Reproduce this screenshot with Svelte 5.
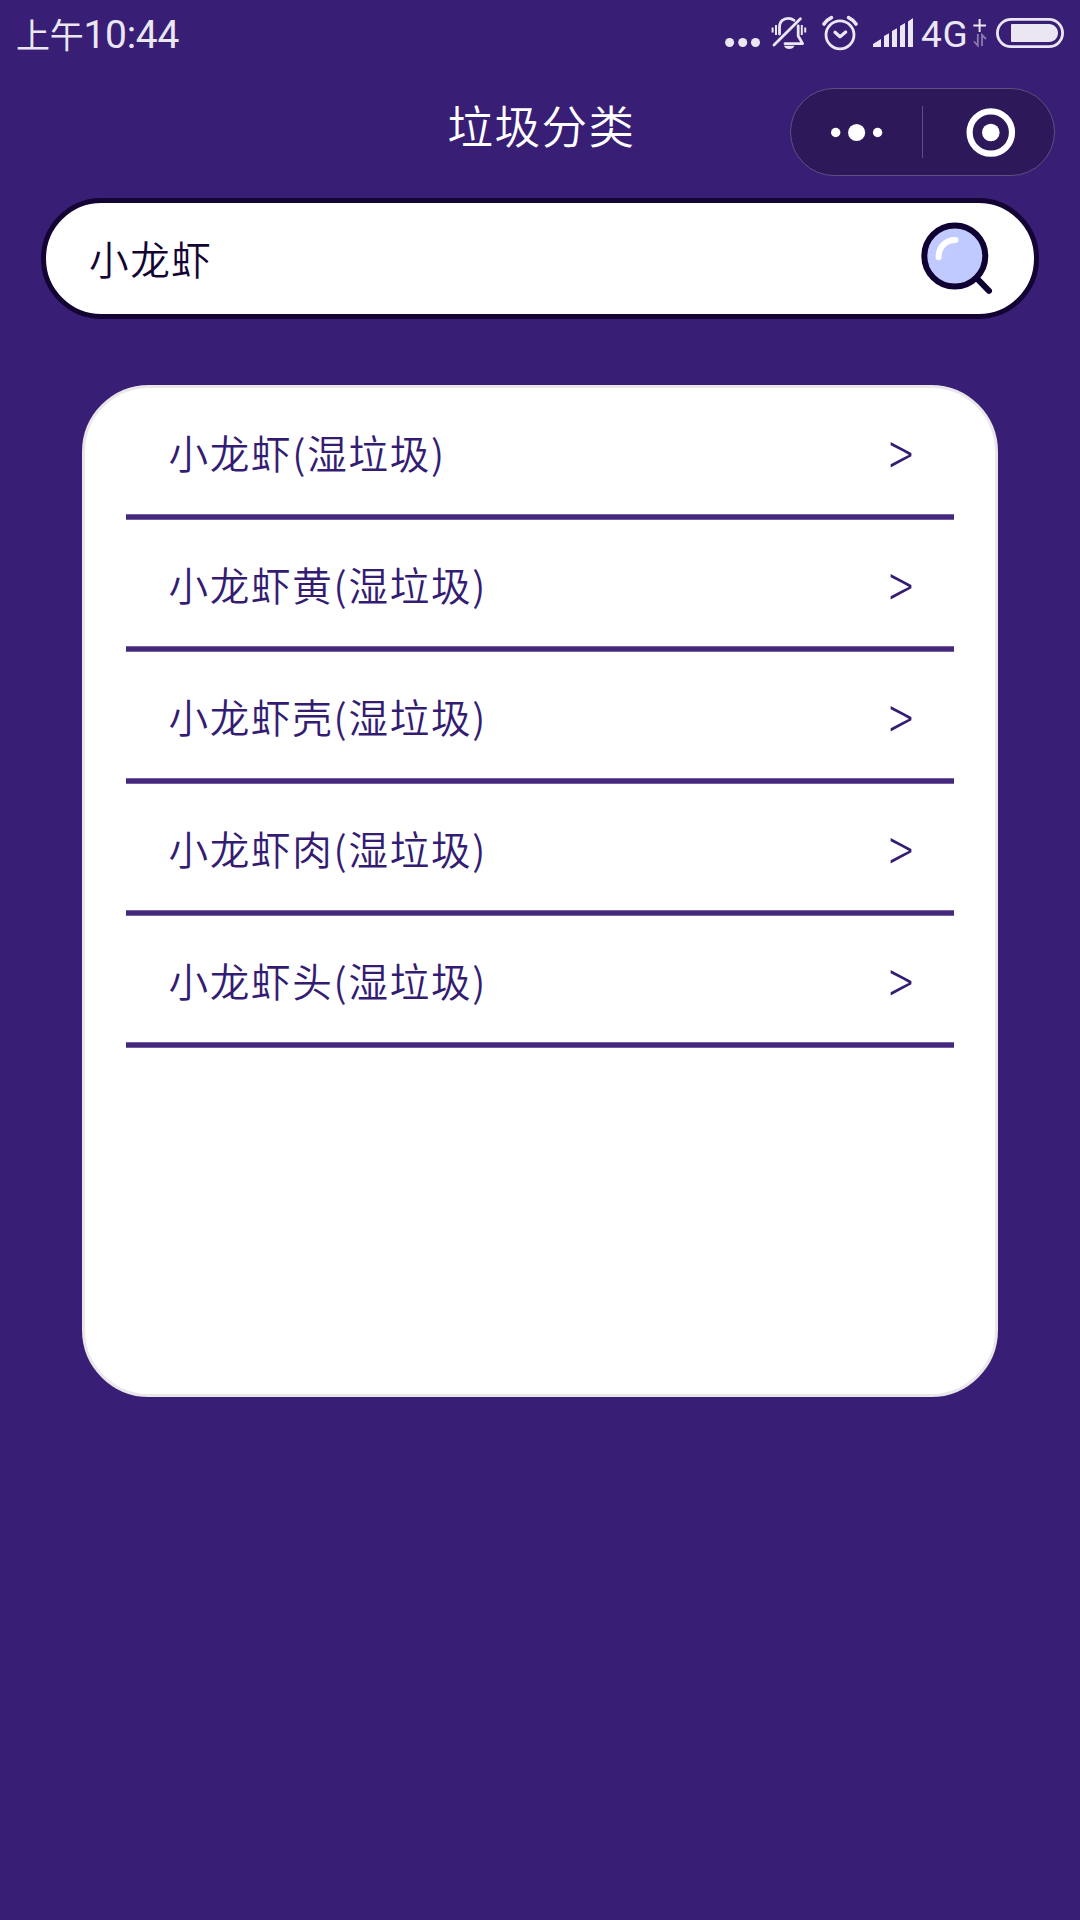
<script lang="ts">
	type Result = { name: string; kind: string };

	let keyword = $state('小龙虾');

	const results: Result[] = [
		{ name: '小龙虾', kind: '湿垃圾' },
		{ name: '小龙虾黄', kind: '湿垃圾' },
		{ name: '小龙虾壳', kind: '湿垃圾' },
		{ name: '小龙虾肉', kind: '湿垃圾' },
		{ name: '小龙虾头', kind: '湿垃圾' }
	];
</script>

<div class="page">
	<div class="status">
		<div class="time"><span class="ampm">上午</span>10:44</div>
		<div class="indicators">
			<svg class="more" width="36" height="60" viewBox="0 0 36 60">
				<circle cx="5.6" cy="42.5" r="4.5" />
				<circle cx="18.7" cy="42.5" r="4.5" />
				<circle cx="31.5" cy="42.5" r="4.5" />
			</svg>
			<!-- muted bell -->
			<svg class="bell" width="36" height="60" viewBox="0 0 36 60">
				<g class="line">
					<path d="M8.5 34V27C8.5 21.5 12.5 18.3 17.2 18.3C19.5 18.3 21.5 19 23 20.3" />
					<path d="M27.2 26V36L31.6 43.6H14" />
					<path d="M29.4 18.8L3 45" />
				</g>
				<path class="thin" d="M5 25V35M1.6 27.5V32.5M30.8 25V35M34.2 27.5V32.5" />
				<path d="M13 45.8H23.5C22.5 48 20.8 49 18.2 49S14 48 13 45.8Z" />
			</svg>
			<!-- alarm clock -->
			<svg class="alarm" width="36" height="60" viewBox="0 0 36 60">
				<g class="line">
					<circle cx="18" cy="34.8" r="14" />
					<path d="M13 32.3L18 36.8L23.7 32" stroke-width="3.2" />
					<path d="M2 24Q4.8 19.8 9.4 17.6M34 24Q31.2 19.8 26.6 17.6" stroke-width="3.6" />
				</g>
			</svg>
			<svg class="signal" width="41" height="60" viewBox="0 0 41 60">
				<path d="M0 47V44L8 39V47ZM11 47V36L16 33.3V47ZM19 47V31L24 28.3V47ZM27 47V26L32 23V47ZM35 47V21.5L40 18V47Z" />
			</svg>
			<span class="net">4G</span>
			<svg class="plus" width="14" height="60" viewBox="0 0 14 60">
				<path class="thin" d="M0.3 25.5H13M6.6 19V32" />
				<path class="faint" d="M4.8 34V45.5L1 41.5M9 46V35L13 39" />
			</svg>
			<svg class="battery" width="68" height="60" viewBox="0 0 68 60">
				<rect class="line" x="1.4" y="19.4" width="65.2" height="27.3" rx="13.6" />
				<path d="M16 24H53C58 24 62 28 62 33S58 42 53 42H16Q15 42 15 41V25Q15 24 16 24Z" />
			</svg>
		</div>
	</div>

	<header class="nav">
		<h1>垃圾分类</h1>
		<div class="capsule">
			<svg width="131" height="86" viewBox="0 0 131 86">
				<circle cx="44.7" cy="43.5" r="4.7" />
				<circle cx="65.6" cy="43.5" r="8.6" />
				<circle cx="86.6" cy="43.5" r="4.7" />
			</svg>
			<i class="split"></i>
			<svg width="131" height="86" viewBox="0 0 131 86">
				<circle class="ring" cx="67.8" cy="43.5" r="21.2" />
				<circle cx="67.8" cy="43.5" r="8.8" />
			</svg>
		</div>
	</header>

	<div class="search">
		<input type="text" aria-label="垃圾名称" bind:value={keyword} />
		<svg class="lens" width="76" height="76" viewBox="0 0 76 76">
			<path d="M57.7 56.2L71 69.8" />
			<circle cx="36.8" cy="35" r="30.5" />
			<path class="shine" d="M20.6 36.2C20.6 26.4 27.2 18.9 37.5 18.9" />
		</svg>
	</div>

	<ul class="results">
		{#each results as item (item.name)}
			<li>
				<span>{item.name}({item.kind})</span>
				<span class="arrow">&gt;</span>
			</li>
		{/each}
	</ul>
</div>

<style>
	:global(body) {
		background: #381e74;
	}
	.page {
		box-sizing: border-box;
		height: 1920px;
		overflow: hidden;
		background: #381e74;
		font-family: 'Noto Sans CJK SC', sans-serif;
		font-weight: 350;
	}
	.status {
		display: flex;
		justify-content: space-between;
		height: 72px;
		padding: 0 16px;
		color: #ebe7f2;
	}
	.time {
		font-family: Roboto, 'Noto Sans CJK SC', sans-serif;
		font-size: 39px;
		font-weight: 400;
		letter-spacing: -0.3px;
		line-height: 70px;
	}
	.ampm {
		font-size: 34px;
	}
	.indicators {
		display: flex;
		align-items: flex-start;
		fill: #ebe7f2;
	}
	.indicators svg {
		flex: none;
	}
	.bell {
		margin-left: 11px;
	}
	.alarm {
		margin-left: 15px;
	}
	.signal {
		margin-left: 15px;
	}
	.net {
		width: 50px;
		margin-left: 7px;
		font-family: Roboto, sans-serif;
		font-size: 37px;
		font-weight: 400;
		letter-spacing: 0.8px;
		line-height: 70px;
	}
	.plus {
		margin-left: 2px;
	}
	.battery {
		margin-left: 9px;
	}
	.line {
		fill: none;
		stroke: #ebe7f2;
		stroke-width: 2.8;
		stroke-linecap: round;
		stroke-linejoin: round;
	}
	.thin {
		fill: none;
		stroke: #ebe7f2;
		stroke-width: 2;
	}
	.faint {
		fill: none;
		stroke: #8c7bae;
		stroke-width: 1.8;
	}
	.nav {
		display: grid;
		grid-template-columns: 1fr auto 1fr;
		height: 126px;
	}
	h1 {
		grid-column: 2;
		margin: 0;
		padding-left: 3px;
		color: #fff;
		font-size: 45.5px;
		font-weight: 350;
		letter-spacing: 1.5px;
		line-height: 105px;
	}
	.capsule {
		box-sizing: border-box;
		display: flex;
		align-items: center;
		justify-self: end;
		width: 265px;
		height: 88px;
		margin: 16px 25px 0 0;
		border: 1px solid #634d86;
		border-radius: 44px;
		background: #2d185a;
		fill: #fff;
	}
	.split {
		width: 1px;
		height: 52px;
		background: #634d86;
	}
	.ring {
		fill: none;
		stroke: #fff;
		stroke-width: 6.2;
	}
	.search {
		box-sizing: border-box;
		display: flex;
		align-items: center;
		justify-content: space-between;
		width: 998px;
		height: 121px;
		margin: 0 auto;
		padding: 0 40px 0 43px;
		border: 5px solid #130433;
		border-radius: 61px;
		background: #fff;
	}
	input {
		flex: 1;
		min-width: 0;
		padding: 0 0 1px;
		border: 0;
		outline: 0;
		background: none;
		color: #130433;
		font: inherit;
		font-size: 39.6px;
		letter-spacing: 1.6px;
		line-height: 60px;
	}
	.lens {
		fill: #c0caff;
		stroke: #0f0233;
		stroke-width: 6;
		stroke-linecap: round;
	}
	.shine {
		fill: none;
		stroke: #fff;
	}
	.results {
		box-sizing: border-box;
		width: 916px;
		height: 1012px;
		margin: 66px auto 0;
		padding: 0 41px;
		border: 3px solid #e9e7ea;
		border-radius: 67px;
		background: #fff;
		list-style: none;
	}
	li {
		box-sizing: border-box;
		display: flex;
		justify-content: space-between;
		height: 132px;
		padding: 0 41px 0 42.5px;
		background: linear-gradient(#75619d 1px, #43287e 1px 5px, #75619d 5px) bottom / 100% 6px no-repeat;
		color: #351c73;
		font-size: 39.6px;
		letter-spacing: 1.7px;
		line-height: 128px;
	}
	.arrow {
		font-size: 45px;
		font-weight: 300;
		letter-spacing: 0;
		transform: scaleY(1.35);
		transform-origin: 50% 66px;
	}
</style>
